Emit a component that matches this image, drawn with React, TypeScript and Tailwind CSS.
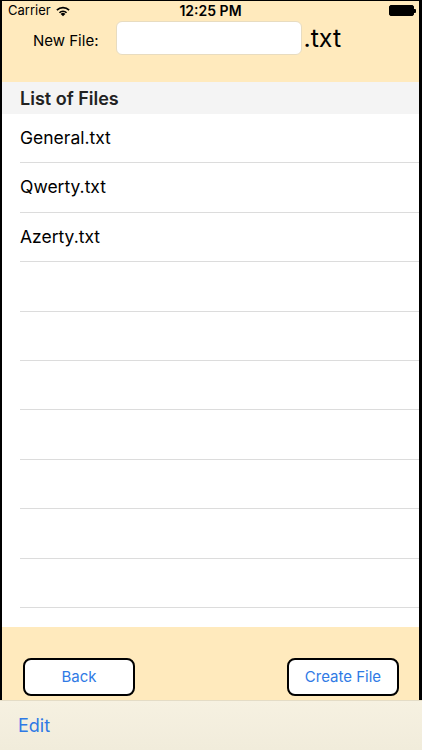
import React from "react";

const font = { fontFamily: "Inter, 'Noto Sans', sans-serif" };

function Wifi() {
  return (
    <svg width="16" height="12" viewBox="0 0 15 11">
      <path d="M7.5 10.5 L5.3 8.2 A3.2 3.2 0 0 1 9.7 8.2 Z" fill="#000" />
      <path d="M3.6 6.6 A5.6 5.6 0 0 1 11.4 6.6 L10.3 7.7 A4.1 4.1 0 0 0 4.7 7.7 Z" fill="#000" />
      <path d="M1.2 4.2 A9 9 0 0 1 13.8 4.2 L12.7 5.3 A7.5 7.5 0 0 0 2.3 5.3 Z" fill="#000" />
    </svg>
  );
}

function Battery() {
  return (
    <div className="flex items-center">
      <div className="w-[25px] h-[11px] rounded-[2px] border border-black bg-black" />
      <div className="w-[2px] h-[4px] bg-black rounded-r-[1px]" />
    </div>
  );
}

export default function App() {
  const rows = ["General.txt", "Qwerty.txt", "Azerty.txt", "", "", "", "", "", "", ""];
  return (
    <div className="w-[422px] h-[750px] flex flex-col overflow-hidden" style={font}>
      <div className="flex-1 bg-black pl-[2px] pr-[3px] pt-[1px] flex flex-col min-h-0">
        <div className="flex-1 bg-[#ffeabd] flex flex-col min-h-0">
          {/* status bar */}
          <div className="h-[19px] relative flex items-center px-[6px] text-[13px] text-black">
            <span className="flex items-center gap-[4px]">
              Carrier <Wifi />
            </span>
            <span className="absolute left-0 right-0 text-center font-semibold text-[14px]">12:25 PM</span>
            <span className="ml-auto -mr-[3px]">
              <Battery />
            </span>
          </div>
          {/* new file row */}
          <div className="h-[62px] flex items-start pt-[1px]">
            <span className="text-[15px] text-black ml-[31px] mt-[9px]">New File:</span>
            <div className="ml-[18px] w-[186px] h-[34px] bg-white rounded-[6px] border border-[#e8dcc0]" />
            <span className="text-[25px] leading-none text-black ml-[1px] mt-[5px]">.txt</span>
          </div>
          {/* section header */}
          <div className="h-[32px] bg-[#f4f4f4] flex items-center pl-[18px] text-[18px] font-semibold text-[#222]">
            List of Files
          </div>
          {/* table */}
          <div className="bg-white h-[513px] overflow-hidden">
            {rows.map((r, i) => (
              <div key={i} className="h-[49.4px] pl-[18px] flex flex-col">
                <div className="flex-1 flex items-center text-[17.5px] text-black">{r}</div>
                <div className="h-px bg-[#dcdcdc]" />
              </div>
            ))}
          </div>
          {/* buttons */}
          <div className="flex-1 flex items-end justify-between pl-[21px] pr-[20px] pb-[4px]">
            <button className="w-[112px] h-[38px] bg-white border-2 border-black rounded-[8px] text-[15px] text-[#2f7ae5]">
              Back
            </button>
            <button className="w-[112px] h-[38px] bg-white border-2 border-black rounded-[8px] text-[15px] text-[#2f7ae5]">
              Create File
            </button>
          </div>
        </div>
      </div>
      {/* toolbar */}
      <div className="h-[50px] bg-gradient-to-b from-[#f6f1e1] to-[#f1ecdb] border-t border-[#e4dcc6] flex items-center pl-[18px]">
        <span className="text-[18px] text-[#2f7ae5]">Edit</span>
      </div>
    </div>
  );
}
